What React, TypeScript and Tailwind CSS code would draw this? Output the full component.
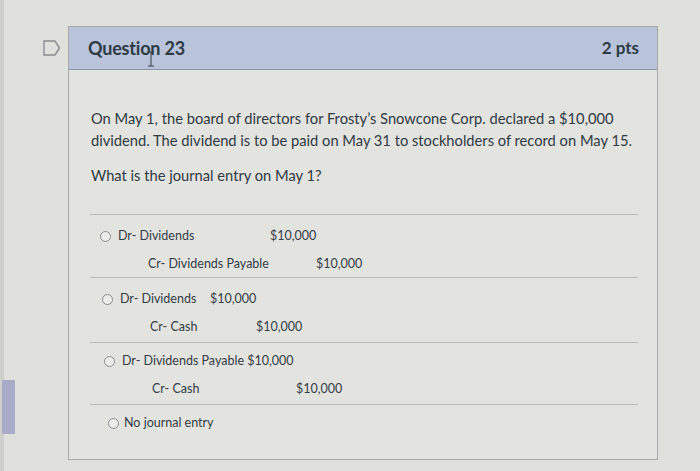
import React from "react";

const Radio = () => (
  <span className="inline-block w-[11px] h-[11px] rounded-full border border-[#8a8d90] bg-[#ececea] shrink-0" />
);

export default function App() {
  return (
    <div
      className="relative w-[700px] h-[471px] bg-[#e0e0dd] overflow-hidden text-[#2d3b45]"
      style={{ fontFamily: "Lato, 'Noto Sans', sans-serif" }}
    >
      {/* left edge strip */}
      <div className="absolute left-0 top-0 w-[4px] h-full bg-[#cfcfcc]" />
      <div className="absolute left-[2px] top-[380px] w-[13px] h-[54px] bg-[#a9acc9]" />

      <div className="flex pt-[26px] pl-[43px]">
        {/* flag icon */}
        <div className="w-[25px] pt-[14px]">
          <svg width="18" height="16" viewBox="0 0 18 16">
            <path d="M1 1 H12 L16.5 8 L12 15 H1 Z" fill="none" stroke="#8a8c8f" strokeWidth="1.4" />
          </svg>
        </div>

        {/* card */}
        <div className="w-[590px] h-[434px] border border-[#a7a9ab] bg-[#e3e3e0] flex flex-col">
          <div className="relative h-[43px] bg-[#b9c3da] border-b border-[#8e96a6] flex items-center justify-between pl-[19px] pr-[18px]">
            <span className="text-[18px] font-bold tracking-[-0.2px]">Question 23</span>
            <span className="text-[17px] font-bold">2 pts</span>
            <svg className="absolute left-[78px] top-[24px]" width="8" height="16" viewBox="0 0 8 16">
              <path d="M1 1 H7 M4 1 V15 M1 15 H7" stroke="#3a3f45" strokeWidth="1" fill="none" />
            </svg>
          </div>

          <div className="pt-[37px] pl-[22px] pr-[22px] text-[14.7px] leading-[22px] text-[#2f3a44]">
            <p>
              On May 1, the board of directors for Frosty’s Snowcone Corp. declared a $10,000 dividend. The dividend is
              to be paid on May 31 to stockholders of record on May 15.
            </p>
            <p className="mt-[13px]">What is the journal entry on May 1?</p>
          </div>

          <div className="mt-[28px] ml-[21px] w-[548px] text-[12.5px] text-[#333d47]">
            {/* option 1 */}
            <div className="border-t border-[#b9bbbd] h-[63px] pt-[13px] pl-[10px]">
              <div className="flex items-center h-[16px]">
                <Radio />
                <span className="ml-[7px] w-[152px]">Dr- Dividends</span>
                <span>$10,000</span>
              </div>
              <div className="flex items-center h-[16px] mt-[12px] pl-[48px]">
                <span className="w-[168px]">Cr- Dividends Payable</span>
                <span>$10,000</span>
              </div>
            </div>
            {/* option 2 */}
            <div className="border-t border-[#b9bbbd] h-[65px] pt-[13px] pl-[12px]">
              <div className="flex items-center h-[16px]">
                <Radio />
                <span className="ml-[7px] w-[90px]">Dr- Dividends</span>
                <span>$10,000</span>
              </div>
              <div className="flex items-center h-[16px] mt-[12px] pl-[48px]">
                <span className="w-[106px]">Cr- Cash</span>
                <span>$10,000</span>
              </div>
            </div>
            {/* option 3 */}
            <div className="border-t border-[#b9bbbd] h-[62px] pt-[10px] pl-[14px]">
              <div className="flex items-center h-[16px]">
                <Radio />
                <span className="ml-[7px]">Dr- Dividends Payable $10,000</span>
              </div>
              <div className="flex items-center h-[16px] mt-[12px] pl-[48px]">
                <span className="w-[144px]">Cr- Cash</span>
                <span>$10,000</span>
              </div>
            </div>
            {/* option 4 */}
            <div className="border-t border-[#b9bbbd] pt-[10px] pl-[18px]">
              <div className="flex items-center h-[16px]">
                <Radio />
                <span className="ml-[5px]">No journal entry</span>
              </div>
            </div>
          </div>
        </div>
      </div>
    </div>
  );
}
